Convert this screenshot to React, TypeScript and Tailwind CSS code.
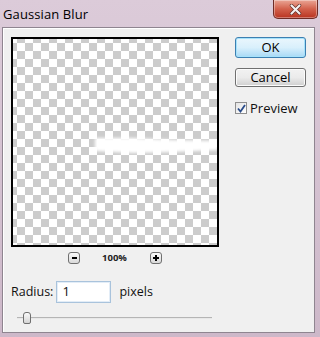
import React from "react";

const font = { fontFamily: '"Open Sans", "Noto Sans", sans-serif' };

export default function App() {
  return (
    <div
      className="w-[320px] h-[337px] flex flex-col bg-gradient-to-b from-[#dccbd9] to-[#cdb8c9] overflow-hidden"
      style={font}
    >
      {/* Title bar */}
      <div className="h-[27px] flex items-start justify-between">
        <div className="pl-[3px] pt-[5px] text-[13px] leading-[18px] text-black tracking-[0.1px]">
          Gaussian Blur
        </div>
        <div className="mr-[2px] w-[45px] h-[19px] rounded-b-[5px] border border-t-0 border-[#6e2c26] bg-gradient-to-b from-[#e9a595] via-[#d2604b] to-[#b8321f] flex items-center justify-center shadow-[inset_0_0_0_1px_rgba(255,255,255,0.35)]">
          <svg width="13" height="11" viewBox="0 0 13 11">
            <path
              d="M2.5 1.5 L10.5 9.5 M10.5 1.5 L2.5 9.5"
              stroke="#5a2a24"
              strokeWidth="3.4"
              strokeLinecap="round"
            />
            <path
              d="M2.5 1.5 L10.5 9.5 M10.5 1.5 L2.5 9.5"
              stroke="#f4f0f0"
              strokeWidth="2.2"
              strokeLinecap="round"
            />
          </svg>
        </div>
      </div>

      {/* Body */}
      <div className="flex-1 ml-[2px] mr-[5px] mb-[4px] border border-[#8f8590] bg-[#f0f0f0] flex shadow-[inset_1px_1px_0_#ffffff]">
        {/* Left column */}
        <div className="flex flex-col pl-[8px] pt-[9px] w-[220px]">
          <div className="relative w-[208px] h-[210px] border-2 border-black bg-white overflow-hidden">
            <div className="absolute inset-0 bg-[conic-gradient(#cccccc_25%,#ffffff_0_50%,#cccccc_0_75%,#ffffff_0)] bg-[length:16px_16px] bg-[position:-4px_-4px]" />
            <svg
              className="absolute left-0 top-0"
              width="208"
              height="210"
              viewBox="0 0 208 210"
            >
              <defs>
                <filter id="bl" x="-20%" y="-100%" width="140%" height="300%">
                  <feGaussianBlur stdDeviation="1.6" />
                </filter>
              </defs>
              <path
                d="M82 99 L120 99 L160 101 L205 102 L205 111 L160 113 L120 114 L82 112 Z"
                fill="#ffffff"
                filter="url(#bl)"
              />
            </svg>
          </div>

          {/* zoom controls */}
          <div className="flex items-center h-[12px] mt-[5px] ml-[57px]">
            <div className="w-[12px] h-[12px] rounded-[3px] border border-[#707070] bg-gradient-to-b from-[#f8f8f8] to-[#dadada] flex items-center justify-center">
              <div className="w-[5px] h-[1.5px] bg-black" />
            </div>
            <div className="ml-[22px] w-[25px] text-[9.5px] font-bold leading-[12px] text-[#222] text-center">
              100%
            </div>
            <div className="ml-[23px] w-[12px] h-[12px] rounded-[3px] border border-[#707070] bg-gradient-to-b from-[#f8f8f8] to-[#dadada] flex items-center justify-center relative">
              <div className="w-[6px] h-[1.5px] bg-black" />
              <div className="absolute w-[1.5px] h-[6px] bg-black" />
            </div>
          </div>

          {/* radius row */}
          <div className="flex items-center mt-[17px] h-[22px]">
            <span className="text-[12.5px] leading-[16px] text-[#111]">Radius:</span>
            <div className="ml-[3px] w-[55px] h-[22px] border border-[#a9c3dc] bg-white shadow-[inset_0_0_0_1px_#e3edf7] flex items-center pl-[5px] text-[13px] text-[#111]">
              1
            </div>
            <span className="ml-[8px] text-[12.5px] leading-[16px] text-[#111]">pixels</span>
          </div>

          {/* slider */}
          <div className="relative h-[14px] mt-[8px] ml-[6px] w-[195px] flex items-center">
            <div className="w-full h-[2px] bg-[#b5b5b5] border-b border-[#e8e8e8]" />
            <div className="absolute left-[6px] top-[1px] w-[8px] h-[12px] rounded-t-[3px] rounded-b-[2px] border border-[#6f6f6f] bg-gradient-to-b from-[#fafafa] to-[#d4d4d4]" />
          </div>
        </div>

        {/* Right column */}
        <div className="flex flex-col pt-[9px] ml-[12px]">
          <div className="w-[71px] h-[21px] rounded-[3px] border border-[#3c7fb1] bg-gradient-to-b from-[#eaf6fd] via-[#d9f0fc] to-[#a7d9f5] shadow-[inset_0_0_0_1px_#a6e2fb] flex items-center justify-center text-[13px] text-black">
            OK
          </div>
          <div className="mt-[10px] w-[71px] h-[19px] rounded-[3px] border border-[#707070] bg-gradient-to-b from-[#f2f2f2] via-[#ebebeb] to-[#cfcfcf] shadow-[inset_0_0_0_1px_#fcfcfc] flex items-center justify-center text-[13px] text-black">
            Cancel
          </div>
          <div className="mt-[15px] flex items-center h-[12px]">
            <div className="w-[12px] h-[12px] border border-[#8f8f8f] bg-gradient-to-br from-[#e4e4e4] to-[#ffffff] flex items-center justify-center">
              <svg width="9" height="9" viewBox="0 0 9 9">
                <path
                  d="M1 4.5 L3.5 7.5 L8 1"
                  fill="none"
                  stroke="#2a4c8a"
                  strokeWidth="1.8"
                />
              </svg>
            </div>
            <span className="ml-[3px] text-[13px] leading-[16px] text-[#111]">Preview</span>
          </div>
        </div>
      </div>
    </div>
  );
}
